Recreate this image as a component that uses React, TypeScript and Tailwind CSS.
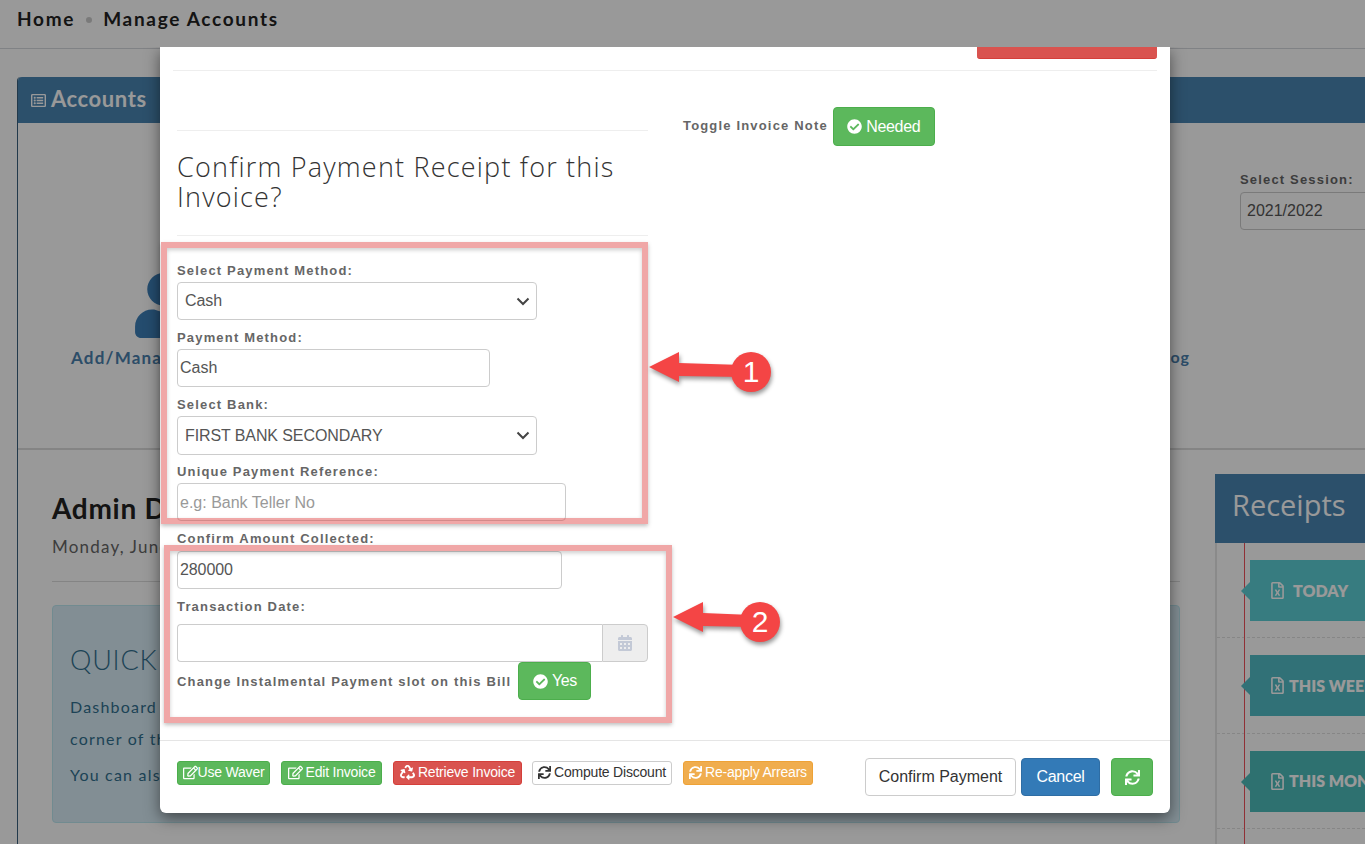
import type { ReactNode } from "react";
import {
  FaCheckCircle,
  FaRegEdit,
  FaRecycle,
  FaSync,
  FaCalendarAlt,
  FaRegFileExcel,
  FaRegListAlt,
  FaUser,
} from "react-icons/fa";

const labelCls =
  "block text-[13px] leading-[17px] font-bold tracking-[1.17px] text-[#666] font-['Liberation_Sans',Arial,sans-serif]";
const fieldCls =
  "block h-[38px] rounded-[4px] border border-[#ccc] bg-white text-[16px] text-[#555] outline-none font-['Liberation_Sans',Arial,sans-serif]";

function Label({ children, className = "" }: { children: ReactNode; className?: string }) {
  return <label className={`${labelCls} ${className}`}>{children}</label>;
}

function Select({ value, className = "" }: { value: string; className?: string }) {
  return (
    <div className={`relative w-[360px] ${className}`}>
      <select defaultValue={value} className={`${fieldCls} h-full w-full appearance-none pl-[7px] tracking-[-0.1px]`}>
        <option>{value}</option>
      </select>
      <svg width="14" height="9" viewBox="0 0 14 9" className="pointer-events-none absolute top-[15px] right-[7px]">
        <path d="M1.5 1.5 L7 7 L12.5 1.5" fill="none" stroke="#444" strokeWidth="2" />
      </svg>
    </div>
  );
}

function SmallButton({ className, icon, children }: { className: string; icon: ReactNode; children: ReactNode }) {
  return (
    <button
      className={`flex h-[24px] items-center justify-center rounded-[3px] border pb-[2px] text-[14px] tracking-[-0.2px] ${className}`}
    >
      {icon}
      {children}
    </button>
  );
}

function ReceiptItem({ label, className, arrow, gap }: { label: string; className: string; arrow: string; gap: string }) {
  return (
    <div className="flex h-[95.4px] items-start border-b border-dashed border-[#e0e0e0] pt-[17px] pl-[33px]">
      <div className={`relative flex h-[61px] w-[165px] items-center overflow-visible pl-[19px] ${className}`}>
        <div className={`absolute top-[22px] -left-[9px] h-0 w-0 border-y-[9px] border-r-[9px] border-y-transparent ${arrow}`} />
        <FaRegFileExcel className="shrink-0 text-[17px] text-white" />
        <span className={`text-[16px] font-extrabold whitespace-nowrap text-white ${gap}`}>{label}</span>
      </div>
    </div>
  );
}

function BackgroundPage() {
  return (
    <div className="h-[844px] w-[1365px] overflow-hidden bg-white font-['Lato',sans-serif]">
      <header className="flex h-[49px] items-start gap-[11px] border-b border-[#d5d9de] pt-[7px] pl-[17px] text-[19px] leading-[24px] font-bold tracking-[1.7px] text-[#222]">
        <span>Home</span>
        <span className="mt-[10px] h-[6px] w-[6px] rounded-full bg-[#ccc]" />
        <span>Manage Accounts</span>
      </header>

      <section className="mt-[28px] ml-[17px] h-[800px] w-[1400px] rounded-t-[4px] border-l border-[#3a5f7d]">
        <div className="flex h-[46px] items-center gap-[5px] rounded-t-[4px] bg-[#4a85b3] pb-[4px] pl-[13px] text-[22px] font-bold tracking-[0.6px] text-white">
          <FaRegListAlt className="mt-[4px] text-[15px]" />
          Accounts
        </div>
        <div className="flex h-[327px] border-b-2 border-[#ddd]">
          <div className="mt-[150px] ml-[53px] w-[210px] shrink-0">
            <FaUser className="ml-[60px] text-[65px] text-[#3d7fb8]" />
            <span className="mt-[7px] block text-[17px] font-bold tracking-[1.2px] whitespace-nowrap text-[#4a80ad]">
              Add/Manage Accounts
            </span>
          </div>
          <div className="mt-[222px] ml-[849px] w-[60px] shrink-0 text-right text-[16px] font-bold tracking-[1px] whitespace-nowrap text-[#4a80ad]">
            Log
          </div>
          <div className="mt-[48px] ml-[50px] w-[200px] shrink-0">
            <Label>Select Session:</Label>
            <select defaultValue="2021/2022" className={`${fieldCls} mt-[4px] w-[200px] appearance-none pl-[6px]`}>
              <option>2021/2022</option>
            </select>
          </div>
        </div>

        <div className="flex">
          <div className="w-[1162px] shrink-0 pt-[41px] pl-[34px]">
            <h1 className="text-[28px] leading-[34px] font-bold tracking-[0.7px] text-[#222]">Admin Dashboard</h1>
            <p className="mt-[9px] text-[17px] tracking-[1.2px] text-[#666]">Monday, June</p>
            <div className="mt-[21px] border-t border-[#ddd]" />
            <div className="mt-[23px] h-[218px] rounded-[4px] border border-[#bce8f1] bg-[#d9edf7] pt-[36px] pl-[17px] text-[#31708f]">
              <h2 className="text-[27px] leading-[36px] font-light tracking-[0.8px]">QUICK GUIDE</h2>
              <p className="mt-[13px] text-[16px] leading-[32px] tracking-[1.2px]">
                Dashboard
                <br />
                corner of the
              </p>
              <p className="mt-[4px] text-[16px] leading-[32px] tracking-[1.2px]">You can also</p>
            </div>
          </div>
          <div className="mt-[24px] ml-[35px] w-[200px] shrink-0">
            <div className="flex h-[69px] items-center bg-[#4a85b3] pb-[8px] pl-[17px] text-[29px] text-white font-['Open_Sans',sans-serif]">
              Receipts
            </div>
            <div className="relative h-[320px] border-l-2 border-[#e6e6e6]">
              <div className="absolute top-0 bottom-0 left-[27px] w-px bg-[#f0505a]" />
              <ReceiptItem label="TODAY" className="bg-[#5dcfd5]" arrow="border-r-[#5dcfd5]" gap="ml-[7px]" />
              <ReceiptItem label="THIS WEEK" className="bg-[#52bcc6]" arrow="border-r-[#52bcc6]" gap="ml-[3px]" />
              <ReceiptItem label="THIS MONTH" className="bg-[#4dbcbb]" arrow="border-r-[#4dbcbb]" gap="ml-[3px]" />
            </div>
          </div>
        </div>
      </section>
    </div>
  );
}

function PaymentModal() {
  return (
    <div className="ml-[160px] h-[766px] w-[1010px] rounded-b-[6px] bg-white shadow-[0_5px_15px_rgba(0,0,0,0.5)] font-['Liberation_Sans',Arial,sans-serif]">
      <div className="mx-[13px] flex h-[24px] justify-end border-b border-[#eee]">
        <div className="h-[12px] w-[180px] rounded-b-[3px] border-b border-[#d43f3a] bg-[#d9534f]" />
      </div>

      <div className="flex h-[669px] pl-[17px]">
        <div className="w-[471px]">
          <div className="mt-[59px] border-t border-[#eee]" />
          <h3 className="mt-[21px] text-[27px] leading-[30px] font-light tracking-[1.2px] text-[#333] font-['Open_Sans',sans-serif]">
            Confirm Payment Receipt for this Invoice?
          </h3>
          <div className="mt-[23px] border-t border-[#eee]" />

          <Label className="mt-[26px]">Select Payment Method:</Label>
          <Select value="Cash" className="mt-[3px] h-[38px]" />
          <Label className="mt-[9px]">Payment Method:</Label>
          <input defaultValue="Cash" className={`${fieldCls} mt-[3px] w-[313px] px-[2px]`} />
          <Label className="mt-[9px]">Select Bank:</Label>
          <Select value="FIRST BANK SECONDARY" className="mt-[3px] h-[39px]" />
          <Label className="mt-[8px]">Unique Payment Reference:</Label>
          <input
            placeholder="e.g: Bank Teller No"
            className={`${fieldCls} mt-[3px] w-[389px] px-[2px] pt-[2px] placeholder:text-[#999]`}
          />
          <Label className="mt-[9px]">Confirm Amount Collected:</Label>
          <input defaultValue="280000" className={`${fieldCls} mt-[4px] w-[385px] px-[2px] tracking-[-0.1px]`} />
          <Label className="mt-[9px]">Transaction Date:</Label>
          <div className="mt-[9px] flex h-[38px]">
            <input className={`${fieldCls} w-[425px] rounded-r-none border-r-0`} />
            <div className="flex w-[46px] items-center justify-center rounded-r-[4px] border border-[#ccc] bg-[#eee]">
              <FaCalendarAlt className="text-[16px] text-[#c3c9d6]" />
            </div>
          </div>
          <div className="flex items-center gap-[7px]">
            <Label>Change Instalmental Payment slot on this Bill</Label>
            <button className="flex h-[38px] w-[73px] items-center justify-center gap-[4px] rounded-[4px] border border-[#4cae4c] bg-[#5cb85c] text-[16px] tracking-[-0.5px] text-white">
              <FaCheckCircle className="text-[15px]" />
              Yes
            </button>
          </div>
        </div>

        <div className="mt-[36px] ml-[35px] flex h-[39px] items-center gap-[5px]">
          <Label className="mb-[2px]">Toggle Invoice Note</Label>
          <button className="flex h-[39px] w-[102px] items-center justify-center gap-[4px] rounded-[4px] border border-[#4cae4c] bg-[#5cb85c] text-[16px] tracking-[-0.3px] text-white">
            <FaCheckCircle className="text-[15px]" />
            Needed
          </button>
        </div>
      </div>

      <footer className="flex h-[73px] items-start border-t border-[#e5e5e5] pl-[17px]">
        <div className="mt-[20px] flex gap-[11px]">
          <SmallButton className="w-[93px] border-[#4cae4c] bg-[#5cb85c] text-white" icon={<FaRegEdit className="text-[15px]" />}>
            Use Waver
          </SmallButton>
          <SmallButton className="w-[101px] gap-[3px] border-[#4cae4c] bg-[#5cb85c] text-white" icon={<FaRegEdit className="text-[15px]" />}>
            Edit Invoice
          </SmallButton>
          <SmallButton className="w-[129px] gap-[3px] border-[#d43f3a] bg-[#d9534f] text-white" icon={<FaRecycle className="text-[15px]" />}>
            Retrieve Invoice
          </SmallButton>
          <SmallButton className="-ml-px w-[140px] gap-[3px] border-[#ccc] bg-white text-[#333]" icon={<FaSync className="text-[13px]" />}>
            Compute Discount
          </SmallButton>
          <SmallButton className="w-[130px] gap-[3px] border-[#eea236] bg-[#f0ad4e] text-white" icon={<FaSync className="text-[13px]" />}>
            Re-apply Arrears
          </SmallButton>
        </div>
        <div className="mt-[17px] ml-[52px] flex">
          <button className="h-[38px] w-[151px] rounded-[4px] border border-[#ccc] bg-white text-[16px] text-[#333]">
            Confirm Payment
          </button>
          <button className="ml-[5px] h-[38px] w-[79px] rounded-[4px] border border-[#2e6da4] bg-[#337ab7] text-[16px] tracking-[-0.3px] text-white">
            Cancel
          </button>
          <button className="ml-[11px] flex h-[38px] w-[42px] items-center justify-center rounded-[4px] border border-[#4cae4c] bg-[#5cb85c] text-white">
            <FaSync className="text-[15px]" />
          </button>
        </div>
      </footer>
    </div>
  );
}

// cx = distance from the arrow tip to the centre of the number badge
function Callout({ className, number, cx }: { className: string; number: string; cx: number }) {
  return (
    <div className={`absolute h-[44px] w-[124px] ${className}`}>
      <svg width="124" height="44" viewBox="0 0 124 44" className="drop-shadow-[1px_3px_2px_rgba(0,0,0,0.4)]">
        <path d={`M0 16 L30 1 L30 12 L${cx - 8} 14 L${cx - 8} 26 L30 25 L30 31 Z`} fill="#f44545" />
        <circle cx={cx} cy="21" r="20" fill="#f44545" />
      </svg>
      <span
        className="absolute top-[4px] w-[40px] text-center text-[30px] leading-[34px] text-white font-['Liberation_Sans',Arial,sans-serif]"
        style={{ left: cx - 20 }}
      >
        {number}
      </span>
    </div>
  );
}

export default function App() {
  return (
    <div className="relative h-[844px] w-[1365px] overflow-hidden">
      <BackgroundPage />
      {/* backdrop */}
      <div className="absolute inset-0 bg-black/40" />
      <div className="absolute inset-x-0 top-[47px] bottom-0 overflow-hidden">
        <PaymentModal />
      </div>

      {/* screenshot annotations */}
      <div className="absolute top-[242px] left-[161px] h-[282px] w-[487px] border-[6px] border-[rgba(220,50,50,0.43)] shadow-[0_2px_4px_rgba(0,0,0,0.25),inset_0_2px_4px_rgba(0,0,0,0.2)]" />
      <div className="absolute top-[545px] left-[164px] h-[178px] w-[508px] border-[6px] border-[rgba(220,50,50,0.43)] shadow-[0_2px_4px_rgba(0,0,0,0.25),inset_0_2px_4px_rgba(0,0,0,0.2)]" />
      <Callout className="top-[351px] left-[649px]" number="1" cx={102} />
      <Callout className="top-[601px] left-[673px]" number="2" cx={87} />
    </div>
  );
}
